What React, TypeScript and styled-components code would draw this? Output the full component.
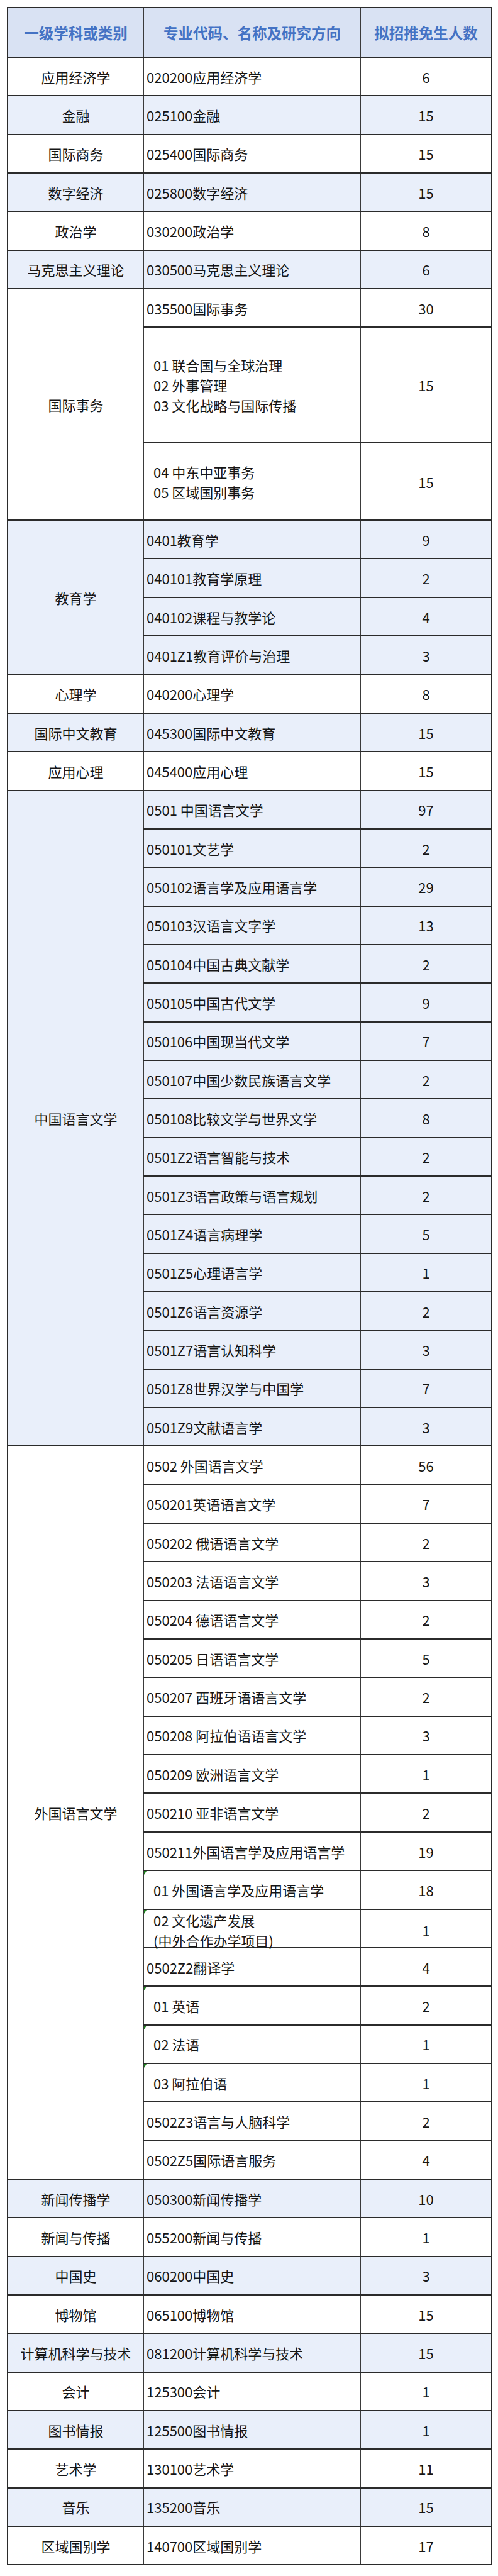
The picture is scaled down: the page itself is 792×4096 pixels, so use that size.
import React from "react";
import styled, { createGlobalStyle } from "styled-components";

const COLORS = {
  line: "#2b2b2b",
  rule: "#3a3a3a",
  headBg: "#d9e2f3",
  headFg: "#4472c4",
  tint: "#e9effa",
  text: "#161616",
  flag: "#1d7f1d",
};

// one ordinary table row, border included
const UNIT = 61.35;
const RULE = 2;

const GlobalStyle = createGlobalStyle`
  body {
    margin: 0;
    background: #fff;
  }
`;

const Page = styled.div`
  padding: 11px;
  font-family: "Noto Sans CJK SC", "Noto Sans", sans-serif;
  color: ${COLORS.text};
`;

const Table = styled.div`
  width: 772px;
  box-sizing: border-box;
  border: 2px solid ${COLORS.line};
`;

const HeadRow = styled.div`
  display: grid;
  grid-template-columns: 215px 345px 1fr;
  height: 77px;
  background: ${COLORS.headBg};
`;

const HeadCell = styled.div`
  display: flex;
  align-items: center;
  justify-content: center;
  font-size: 23.5px;
  font-weight: 700;
  color: ${COLORS.headFg};
  & + & {
    border-left: 1px solid ${COLORS.rule};
  }
`;

const Group = styled.div<{ $tint: boolean }>`
  display: grid;
  grid-template-columns: 215px 1fr;
  border-top: ${RULE}px solid ${COLORS.line};
  background: ${(p) => (p.$tint ? COLORS.tint : "#fff")};
`;

const Subject = styled.div`
  display: flex;
  align-items: center;
  justify-content: center;
  font-size: 22px;
`;

const Items = styled.div`
  display: flex;
  flex-direction: column;
`;

const ItemRow = styled.div<{ $span: number }>`
  display: grid;
  grid-template-columns: 345px 1fr;
  height: ${(p) => p.$span * UNIT - RULE}px;
  & + & {
    border-top: ${RULE}px solid ${COLORS.line};
  }
`;

const Major = styled.div<{ $indent: boolean }>`
  position: relative;
  display: flex;
  flex-direction: column;
  justify-content: center;
  padding-left: ${(p) => (p.$indent ? 15 : 4)}px;
  border-left: 1px solid ${COLORS.rule};
  font-size: 22px;
  line-height: 32px;
  white-space: nowrap;
`;

const Flag = styled.span`
  position: absolute;
  top: 0;
  left: 0;
  width: 0;
  height: 0;
  border-top: 6px solid ${COLORS.flag};
  border-right: 4px solid transparent;
`;

const Count = styled.div`
  display: flex;
  align-items: center;
  justify-content: center;
  border-left: 1px solid ${COLORS.rule};
  font-size: 22px;
`;

interface Item {
  label: string | string[];
  count: number;
  span?: number;
  indent?: boolean;
  flag?: boolean;
}

interface Subj {
  name: string;
  items: Item[];
}

const one = (name: string, label: string, count: number): Subj => ({
  name,
  items: [{ label, count }],
});

const DATA: Subj[] = [
  one("应用经济学", "020200应用经济学", 6),
  one("金融", "025100金融", 15),
  one("国际商务", "025400国际商务", 15),
  one("数字经济", "025800数字经济", 15),
  one("政治学", "030200政治学", 8),
  one("马克思主义理论", "030500马克思主义理论", 6),
  {
    name: "国际事务",
    items: [
      { label: "035500国际事务", count: 30 },
      {
        label: ["01 联合国与全球治理", "02 外事管理", "03 文化战略与国际传播"],
        count: 15,
        span: 3,
        indent: true,
      },
      {
        label: ["04 中东中亚事务", "05 区域国别事务"],
        count: 15,
        span: 2,
        indent: true,
      },
    ],
  },
  {
    name: "教育学",
    items: [
      { label: "0401教育学", count: 9 },
      { label: "040101教育学原理", count: 2 },
      { label: "040102课程与教学论", count: 4 },
      { label: "0401Z1教育评价与治理", count: 3 },
    ],
  },
  one("心理学", "040200心理学", 8),
  one("国际中文教育", "045300国际中文教育", 15),
  one("应用心理", "045400应用心理", 15),
  {
    name: "中国语言文学",
    items: [
      { label: "0501 中国语言文学", count: 97 },
      { label: "050101文艺学", count: 2 },
      { label: "050102语言学及应用语言学", count: 29 },
      { label: "050103汉语言文字学", count: 13 },
      { label: "050104中国古典文献学", count: 2 },
      { label: "050105中国古代文学", count: 9 },
      { label: "050106中国现当代文学", count: 7 },
      { label: "050107中国少数民族语言文学", count: 2 },
      { label: "050108比较文学与世界文学", count: 8 },
      { label: "0501Z2语言智能与技术", count: 2 },
      { label: "0501Z3语言政策与语言规划", count: 2 },
      { label: "0501Z4语言病理学", count: 5 },
      { label: "0501Z5心理语言学", count: 1 },
      { label: "0501Z6语言资源学", count: 2 },
      { label: "0501Z7语言认知科学", count: 3 },
      { label: "0501Z8世界汉学与中国学", count: 7 },
      { label: "0501Z9文献语言学", count: 3 },
    ],
  },
  {
    name: "外国语言文学",
    items: [
      { label: "0502 外国语言文学", count: 56 },
      { label: "050201英语语言文学", count: 7 },
      { label: "050202 俄语语言文学", count: 2 },
      { label: "050203 法语语言文学", count: 3 },
      { label: "050204 德语语言文学", count: 2 },
      { label: "050205 日语语言文学", count: 5 },
      { label: "050207 西班牙语语言文学", count: 2 },
      { label: "050208 阿拉伯语语言文学", count: 3 },
      { label: "050209 欧洲语言文学", count: 1 },
      { label: "050210 亚非语言文学", count: 2 },
      { label: "050211外国语言学及应用语言学", count: 19 },
      { label: "01 外国语言学及应用语言学", count: 18, indent: true, flag: true },
      {
        label: ["02 文化遗产发展", "(中外合作办学项目)"],
        count: 1,
        indent: true,
        flag: true,
      },
      { label: "0502Z2翻译学", count: 4 },
      { label: "01 英语", count: 2, indent: true, flag: true },
      { label: "02 法语", count: 1, indent: true, flag: true },
      { label: "03 阿拉伯语", count: 1, indent: true, flag: true },
      { label: "0502Z3语言与人脑科学", count: 2 },
      { label: "0502Z5国际语言服务", count: 4 },
    ],
  },
  one("新闻传播学", "050300新闻传播学", 10),
  one("新闻与传播", "055200新闻与传播", 1),
  one("中国史", "060200中国史", 3),
  one("博物馆", "065100博物馆", 15),
  one("计算机科学与技术", "081200计算机科学与技术", 15),
  one("会计", "125300会计", 1),
  one("图书情报", "125500图书情报", 1),
  one("艺术学", "130100艺术学", 11),
  one("音乐", "135200音乐", 15),
  one("区域国别学", "140700区域国别学", 17),
];

const Row: React.FC<{ item: Item }> = ({ item }) => {
  const lines = Array.isArray(item.label) ? item.label : [item.label];
  return (
    <ItemRow $span={item.span ?? 1}>
      <Major $indent={!!item.indent}>
        {item.flag && <Flag />}
        {lines.map((l) => (
          <span key={l}>{l}</span>
        ))}
      </Major>
      <Count>{item.count}</Count>
    </ItemRow>
  );
};

export default function App() {
  return (
    <Page>
      <GlobalStyle />
      <Table>
        <HeadRow>
          <HeadCell>一级学科或类别</HeadCell>
          <HeadCell>专业代码、名称及研究方向</HeadCell>
          <HeadCell>拟招推免生人数</HeadCell>
        </HeadRow>
        {DATA.map((g, i) => (
          <Group key={g.name} $tint={i % 2 === 1}>
            <Subject>{g.name}</Subject>
            <Items>
              {g.items.map((it, j) => (
                <Row key={j} item={it} />
              ))}
            </Items>
          </Group>
        ))}
      </Table>
    </Page>
  );
}
